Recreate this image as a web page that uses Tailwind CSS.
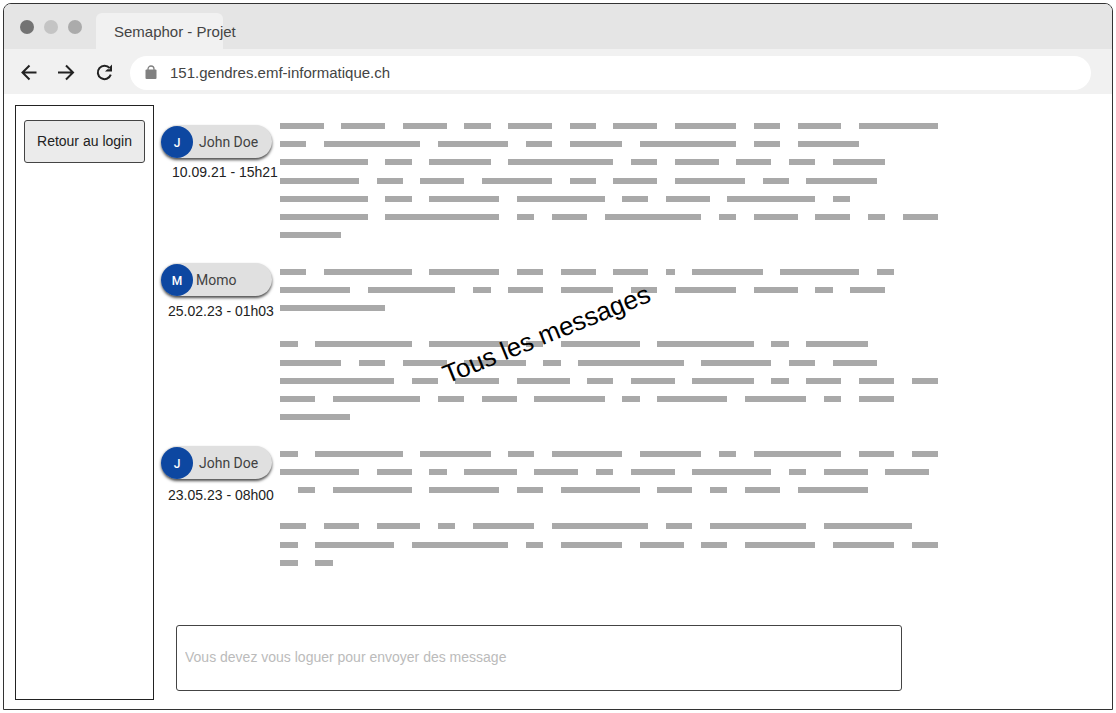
<!DOCTYPE html>
<html lang="fr">
<head>
<meta charset="utf-8">
<title>Semaphor - Projet</title>
<script src="https://cdn.jsdelivr.net/npm/@tailwindcss/browser@4"></script>
</head>
<body class="bg-white font-['Liberation_Sans',Arial,sans-serif] text-sm text-[#222]">
<div class="flex min-h-screen p-[3px]">
  <div class="flex flex-1 flex-col overflow-hidden rounded-t-lg border border-[#333] bg-white">
    <header>
      <div class="flex h-[45px] items-end bg-[#e5e5e5] pl-[16px]">
        <div class="flex gap-[10px] self-center">
          <span class="size-[14px] rounded-full bg-[#737373]"></span>
          <span class="size-[14px] rounded-full bg-[#c4c4c4]"></span>
          <span class="size-[14px] rounded-full bg-[#ababab]"></span>
        </div>
        <div class="ml-[14px] flex h-9 w-[127px] items-center rounded-t-md bg-[#f1f1f1] pt-[2px] pl-[18px] text-[15px] whitespace-nowrap text-[#444]">
          <h1>Semaphor - Projet</h1>
        </div>
      </div>
      <nav class="flex h-[45px] items-center bg-[#f1f1f1] pt-[2px] pr-[21px] pl-[16px]" aria-label="Navigation">
        <button class="mr-[18px]" aria-label="Précédent">
          <svg class="size-[19px]" viewBox="0 0 19 19" fill="none" stroke="#222" stroke-width="2"><path d="M16.500 9.500H3M9.500 2.500l-7 7 7 7"/></svg>
        </button>
        <button class="mr-[19px]" aria-label="Suivant">
          <svg class="size-[19px]" viewBox="0 0 19 19" fill="none" stroke="#222" stroke-width="2"><path d="M1 9.500h14.500M9 2.500l7 7-7 7"/></svg>
        </button>
        <button class="mr-[16px]" aria-label="Recharger">
          <svg class="size-[19px]" viewBox="0 0 19 19" fill="none" stroke="#222" stroke-width="2"><path d="M14.700 5.200A6.700 6.700 0 1 0 15.800 11.700"/><path d="M17 1.500v7h-7l2.300-2.200h2.500V3.700z" fill="#222" stroke="none"/></svg>
        </button>
        <label class="flex h-[34px] flex-1 items-center rounded-full bg-white pl-[15px]">
          <svg class="mr-[13px] h-[15px] w-[12px]" viewBox="0 0 12 15" aria-hidden="true"><rect x="0.500" y="4.500" width="11" height="9.500" rx="1" fill="#808080"/><path d="M3 5V4a3 3 0 0 1 6 0v1" fill="none" stroke="#808080" stroke-width="1.300"/></svg>
          <input class="flex-1 bg-transparent text-[15px] text-[#444] outline-none" type="text" value="151.gendres.emf-informatique.ch" aria-label="Adresse">
        </label>
      </nav>
    </header>

    <div class="flex flex-1">
      <aside class="mt-[11px] mb-[9px] ml-[11px] w-[139px] border border-[#222] px-2 pt-[14px]">
        <button class="h-[43px] w-full rounded-[3px] border border-[#444] bg-[#ebebeb] pb-[2px] whitespace-nowrap">Retour au login</button>
      </aside>

      <main class="flex flex-1 flex-col pl-[7px]">
        <section class="mt-[29px] flex" aria-label="Messages">
          <ul class="mt-[2px] w-[119px]">
            <li class="h-[138px]">
              <div class="flex h-[33px] w-[111px] items-center rounded-full bg-[#e0e0e0] font-['Roboto',sans-serif] text-[#424242] shadow-[0_2px_3px_rgba(0,0,0,0.7)]">
                <span class="flex size-8 items-center justify-center rounded-full bg-[#0d47a1] pt-[2px] text-xs font-medium text-white">J</span>
                <span class="ml-[6px]">John Doe</span>
              </div>
              <time class="mt-[4px] block pl-[11px] leading-5 whitespace-nowrap">10.09.21 - 15h21</time>
            </li>
            <li class="h-[183px]">
              <div class="flex h-[33px] w-[111px] items-center rounded-full bg-[#e0e0e0] font-['Roboto',sans-serif] text-[#424242] shadow-[0_2px_3px_rgba(0,0,0,0.7)]">
                <span class="flex size-8 items-center justify-center rounded-full bg-[#0d47a1] pt-[2px] text-xs font-medium text-white">M</span>
                <span class="ml-[3px]">Momo</span>
              </div>
              <time class="mt-[5px] block pl-[7px] leading-5 whitespace-nowrap">25.02.23 - 01h03</time>
            </li>
            <li>
              <div class="flex h-[33px] w-[111px] items-center rounded-full bg-[#e0e0e0] font-['Roboto',sans-serif] text-[#424242] shadow-[0_2px_3px_rgba(0,0,0,0.7)]">
                <span class="flex size-8 items-center justify-center rounded-full bg-[#0d47a1] pt-[2px] text-xs font-medium text-white">J</span>
                <span class="ml-[6px]">John Doe</span>
              </div>
              <time class="mt-[6px] block pl-[7px] leading-5 whitespace-nowrap">23.05.23 - 08h00</time>
            </li>
          </ul>
          <div class="relative mr-[174px] flex-1">
            <div id="lines" class="grid h-[455px] grid-cols-[repeat(75,minmax(0,1fr))] grid-rows-[repeat(25,minmax(0,1fr))]"></div>
            <p class="absolute top-[193px] left-[156px] -rotate-[22deg] text-[26px] whitespace-nowrap text-black">Tous les messages</p>
          </div>
        </section>
        <input class="mt-auto mr-[210px] mb-[18px] ml-[15px] h-[66px] rounded-[3px] border border-[#444] pb-[2px] pl-2 placeholder:text-[#bbb]" type="text" placeholder="Vous devez vous loguer pour envoyer des message" aria-label="Message">
      </main>
    </div>
  </div>
</div>

<template id="word"><span class="h-[6px] bg-[#a9a9a9]"></span></template>
<script>
// Word lengths of each placeholder line, in columns; words are two columns apart.
const rows = [
  [5,5,5,3,5,3,5,7,3,5,9],
  [3,11,8,3,6,11,3,7],
  [10,3,7,12,3,5,4,3,6],
  [9,3,5,8,3,5,8,3,8],
  [10,3,8,10,3,5,10,2],
  [10,13,2,4,11,2,5,4,2,4],
  [7],
  [],
  [3,10,8,3,4,4,1,8,9,2],
  [8,10,2,4,6,3,7,5,2,4],
  [12],
  [],
  [2,11,9,2,9,11,2,7],
  [7,3,5,7,2,12,8,3,5],
  [13,3,5,6,3,5,7,2,4,4,3],
  [4,10,3,4,8,2,8,7,2,4],
  [8],
  [],
  [2,10,8,3,8,7,2,10,4,3],
  [9,4,2,6,5,2,5,9,2,5,5],
  [0,2,9,8,3,9,4,2,4,8],
  [],
  [3,4,5,2,7,11,3,11,10],
  [2,9,11,2,7,5,3,8,7,3],
  [2,2]
];
const lines = document.getElementById('lines');
const word = document.getElementById('word').content.firstElementChild;
rows.forEach((row, r) => {
  let col = 1;
  for (const n of row) {
    if (n) {
      const el = word.cloneNode(true);
      el.style.gridArea = `${r + 1} / ${col} / auto / span ${n}`;
      lines.append(el);
    }
    col += n + 2;
  }
});
</script>
</body>
</html>
